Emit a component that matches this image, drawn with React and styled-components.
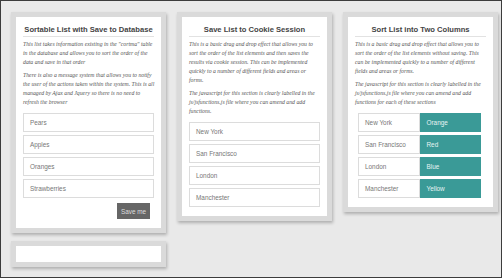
import React from "react";
import styled, { createGlobalStyle } from "styled-components";

const Global = createGlobalStyle`
  html, body {
    margin: 0;
    padding: 0;
    background: #e9e9e9;
  }
`;

const Page = styled.div`
  width: 502px;
  height: 278px;
  box-sizing: border-box;
  border: 1px solid #3c3c3c;
  background: #e9e9e9;
  display: flex;
  align-items: flex-start;
  gap: 11px;
  padding: 11px 0 0 10px;
  overflow: hidden;
`;

const Column = styled.div`
  display: flex;
  flex-direction: column;
  gap: 8px;
`;

const Card = styled.div`
  width: 155px;
  box-sizing: border-box;
  background: #fff;
  border: 5px solid #dadada;
  box-shadow: 1px 2px 3px rgba(0, 0, 0, 0.25);
  padding: ${(p) => (p.empty ? "0" : "7px 7px 9px")};
  height: ${(p) => (p.empty ? "26px" : "auto")};
`;

const Title = styled.h2`
  margin: 0;
  font-family: "Liberation Sans", Arial, sans-serif;
  font-size: 7.6px;
  font-weight: bold;
  color: #444;
  text-align: center;
  line-height: 12px;
  border-bottom: 1px solid #e2e2e2;
`;

const Text = styled.p`
  margin: ${(p) => (p.first ? "3px" : "4px")} 0 0;
  font-family: "Liberation Serif", "Times New Roman", serif;
  font-style: italic;
  font-size: 5.75px;
  line-height: 9px;
  color: #555;
  white-space: nowrap;
`;

const List = styled.ul`
  list-style: none;
  margin: ${(p) => (p.inset ? "6px 5px 0 3px" : "6px 0 0")};
  padding: 0;
  display: flex;
  flex-direction: column;
  gap: 3px;
`;

const Item = styled.li`
  height: 19px;
  box-sizing: border-box;
  border: 1px solid #dcdcdc;
  padding-left: 6px;
  display: flex;
  align-items: center;
  font-family: "Liberation Sans", Arial, sans-serif;
  font-size: 6.4px;
  color: #777;
`;

const Row = styled.li`
  display: grid;
  grid-template-columns: 1fr 1fr;
`;

const Cell = styled.div`
  height: 19px;
  box-sizing: border-box;
  border: 1px solid ${(p) => (p.teal ? "#3a9a97" : "#dcdcdc")};
  background: ${(p) => (p.teal ? "#3a9a97" : "#fff")};
  padding-left: 6px;
  display: flex;
  align-items: center;
  font-family: "Liberation Sans", Arial, sans-serif;
  font-size: 6.4px;
  color: ${(p) => (p.teal ? "#e6f4f3" : "#777")};
`;

const Actions = styled.div`
  display: flex;
  justify-content: flex-end;
  margin-top: 5px;
  padding-right: 4px;
`;

const Button = styled.button`
  height: 16px;
  width: 33px;
  padding: 0;
  border: none;
  background: #666;
  color: #ddd;
  font-family: "Liberation Sans", Arial, sans-serif;
  font-size: 6.4px;
`;

const Para = ({ lines, first }) => (
  <Text first={first}>
    {lines.map((l, i) => (
      <React.Fragment key={i}>
        {i > 0 && <br />}
        {l}
      </React.Fragment>
    ))}
  </Text>
);

const fruits = ["Pears", "Apples", "Oranges", "Strawberries"];
const cities = ["New York", "San Francisco", "London", "Manchester"];
const colours = ["Orange", "Red", "Blue", "Yellow"];

export default function App() {
  return (
    <>
      <Global />
      <Page>
        <Column>
          <Card>
            <Title>Sortable List with Save to Database</Title>
            <Para
              first
              lines={[
                'This list takes information existing in the "cortma" table',
                "in the database and allows you to sort the order of the",
                "data and save in that order",
              ]}
            />
            <Para
              lines={[
                "There is also a message system that allows you to notify",
                "the user of the actions taken within the system. This is all",
                "managed by Ajax and Jquery so there is no need to",
                "refresh the browser",
              ]}
            />
            <List>
              {fruits.map((f) => (
                <Item key={f}>{f}</Item>
              ))}
            </List>
            <Actions>
              <Button>Save me</Button>
            </Actions>
          </Card>
          <Card empty />
        </Column>

        <Card>
          <Title>Save List to Cookie Session</Title>
          <Para
            first
            lines={[
              "This is a basic drag and drop effect that allows you to",
              "sort the order of the list elements and then saves the",
              "results via cookie session. This can be implemented",
              "quickly to a number of different fields and areas or",
              "forms.",
            ]}
          />
          <Para
            lines={[
              "The javascript for this section is clearly labelled in the",
              "js/jsfunctions.js file where you can amend and add",
              "functions.",
            ]}
          />
          <List>
            {cities.map((c) => (
              <Item key={c}>{c}</Item>
            ))}
          </List>
        </Card>

        <Card>
          <Title>Sort List into Two Columns</Title>
          <Para
            first
            lines={[
              "This is a basic drag and drop effect that allows you to",
              "sort the order of the list elements without saving. This",
              "can be implemented quickly to a number of different",
              "fields and areas or forms.",
            ]}
          />
          <Para
            lines={[
              "The javascript for this section is clearly labelled in the",
              "js/jsfunctions.js file where you can amend and add",
              "functions for each of these sections",
            ]}
          />
          <List inset>
            {cities.map((c, i) => (
              <Row key={c}>
                <Cell>{c}</Cell>
                <Cell teal>{colours[i]}</Cell>
              </Row>
            ))}
          </List>
        </Card>
      </Page>
    </>
  );
}
